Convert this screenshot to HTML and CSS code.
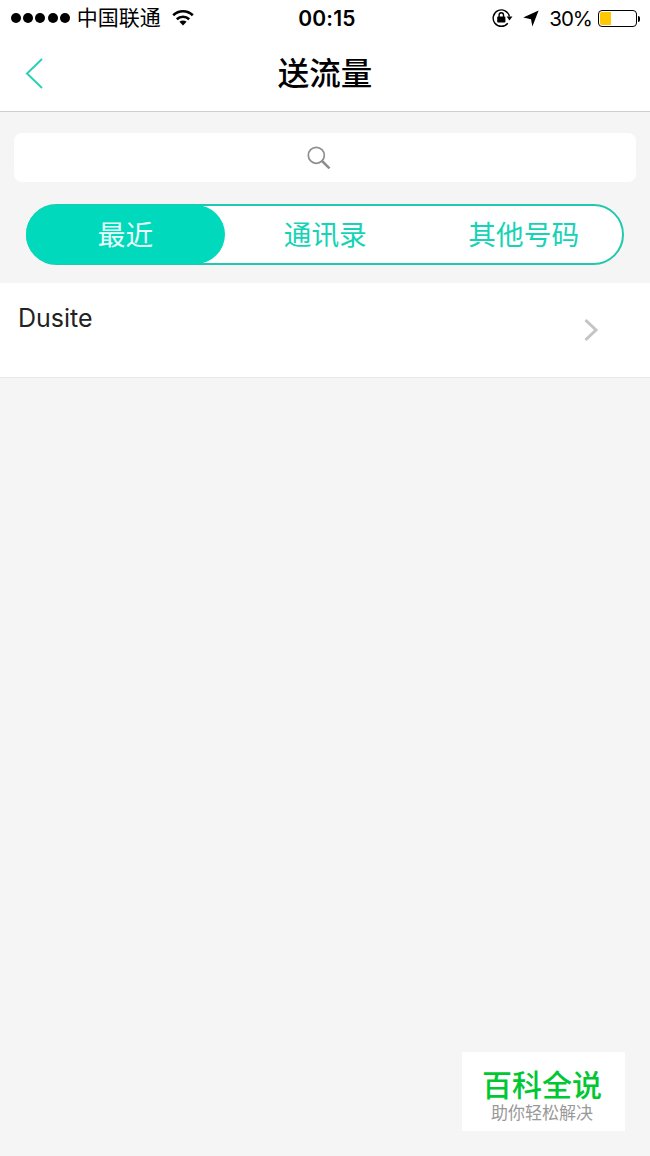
FILE: index.html
```html
<!DOCTYPE html>
<html lang="zh-CN">
<head>
    <meta charset="UTF-8">
    <meta name="viewport" content="width=device-width, initial-scale=1.0">
    <title>送流量</title>
    <link rel="stylesheet" href="styles.css">
</head>
<body>
    <div class="status-bar">
        <div class="status-left">
            <span class="signal"><i></i><i></i><i></i><i></i><i></i></span>
            <span class="carrier">中国联通</span>
            <svg class="wifi" width="22" height="17" viewBox="0 0 22 17" fill="none" stroke="#000" stroke-width="2.6">
                <path d="M1.2 6.3C6.8 .8 15.2 .8 20.8 6.3"/>
                <path d="M4.8 10.2C8.4 6.9 13.6 6.9 17.2 10.2"/>
                <path d="M7.4 12.8C9.5 11 12.5 11 14.6 12.8L11 16.6Z" fill="#000" stroke="none"/>
            </svg>
        </div>
        <span class="time">00:15</span>
        <div class="status-right">
            <svg class="lock" width="21" height="20" viewBox="0 0 21 20" fill="none" stroke="#000" stroke-width="1.4">
                <path d="M15.8 15.2A8.2 8.2 0 1 1 17.4 8.5"/>
                <path d="M14.6 8.6h5.8l-2.9 4z" fill="#000" stroke="none"/>
                <rect x="5.2" y="8.6" width="8.2" height="6" rx=".8" fill="#000" stroke="none"/>
                <path d="M7.1 9V7a2.2 2.2 0 0 1 4.4 0v2"/>
            </svg>
            <svg class="location" width="16" height="17" viewBox="0 0 16 17">
                <path d="M15.6 .4L9.4 16.6L8 9.2L.2 7.4Z"/>
            </svg>
            <span class="percent">30%</span>
            <span class="battery"><span class="battery-level"></span></span>
        </div>
    </div>

    <header class="navbar">
        <a href="#" class="back">
            <svg width="18" height="32" viewBox="0 0 18 32" fill="none" stroke="#2ccfb7" stroke-width="2">
                <path d="M17 1L2 15.5L17 30"/>
            </svg>
        </a>
        <h1 class="title">送流量</h1>
    </header>

    <div class="toolbar">
        <div class="search">
            <svg width="24" height="24" viewBox="0 0 24 24" fill="none" stroke="#8e8e8e">
                <circle cx="9.3" cy="9.3" r="8" stroke-width="1.7"/>
                <path d="M15 15L22.5 22.3" stroke-width="2.5"/>
            </svg>
        </div>
        <div class="tabs">
            <a href="#" class="tab active">最近</a>
            <a href="#" class="tab">通讯录</a>
            <a href="#" class="tab">其他号码</a>
        </div>
    </div>

    <div class="contact">
        <span class="contact-name">Dusite</span>
        <svg class="chevron" width="15" height="24" viewBox="0 0 15 24" fill="none" stroke="#c4c4c4" stroke-width="3">
            <path d="M1.5 2L12 12L1.5 22"/>
        </svg>
    </div>

    <div class="watermark">
        <strong class="watermark-name">百科全说</strong>
        <span class="watermark-slogan">助你轻松解决</span>
    </div>
</body>
</html>
```
FILE: styles.css
```css
:root {
    --primary: #00d9bb;
    --line: #20c9ad;
    --tab-text: #16d3b5;
    --bg: #f5f5f5;
}

* {
    margin: 0;
    padding: 0;
    box-sizing: border-box;
}

body {
    min-height: 1156px;
    background: var(--bg);
    color: #000;
    font-family: Inter, "Noto Sans CJK SC", sans-serif;
}

a {
    text-decoration: none;
}

svg {
    display: block;
}

/* Status bar */
.status-bar {
    display: grid;
    grid-template-columns: 1fr auto 1fr;
    align-items: center;
    height: 36px;
    padding: 0 10px 0 11px;
    background: #fff;
    font-size: 21px;
    line-height: 36px;
}

.status-left,
.status-right {
    display: flex;
    align-items: center;
}

.status-right {
    justify-content: flex-end;
}

.signal {
    display: flex;
    gap: 2.2px;
}

.signal i {
    width: 10px;
    height: 10px;
    border-radius: 50%;
    background: #000;
}

.carrier {
    margin-left: 7px;
    line-height: 36px;
}

.wifi {
    margin-left: 11px;
    margin-bottom: 2px;
}

.time {
    padding: 1px 0 0 3px;
    font-size: 21px;
    font-weight: 600;
    letter-spacing: 0.2px;
    line-height: 35px;
}

.location {
    margin: 0 10px 0 10px;
}

.percent {
    padding-top: 1px;
    font-size: 20.5px;
    letter-spacing: -1px;
    line-height: 35px;
}

.battery {
    position: relative;
    width: 39px;
    height: 17px;
    margin: 0 3px 0 6px;
    padding: 1px;
    border: 1px solid #000;
    border-radius: 4px;
}

.battery::after {
    content: '';
    position: absolute;
    top: 5px;
    right: -4px;
    width: 2px;
    height: 6px;
    border-radius: 0 2px 2px 0;
    background: #000;
}

.battery-level {
    display: block;
    width: 11px;
    height: 13px;
    border-radius: 2px 0 0 2px;
    background: #ffc800;
}

/* Header */
.navbar {
    display: grid;
    grid-template-columns: 1fr auto 1fr;
    align-items: center;
    height: 76px;
    padding: 0 25px;
    background: #fff;
    border-bottom: 1px solid #cfcfcf;
}

.title {
    padding-top: 1px;
    font-size: 31.5px;
    font-weight: 500;
    line-height: 74px;
}

/* Search and tabs */
.toolbar {
    padding: 21px 14px 18px;
}

.search {
    display: flex;
    align-items: center;
    justify-content: center;
    height: 49px;
    padding-right: 13px;
    border-radius: 8px;
    background: #fff;
}

.tabs {
    display: flex;
    height: 61px;
    margin: 22px 12px 0;
    border: 2px solid var(--line);
    border-radius: 31px;
    background: #fff;
}

.tab {
    flex: 1;
    padding-left: 2px;
    color: var(--tab-text);
    font-size: 27.7px;
    line-height: 58px;
    text-align: center;
}

.tab.active {
    flex: 0 0 199px;
    margin: -1px 0 -1px -2px;
    padding-left: 0;
    border-radius: 31px;
    background: var(--primary);
    color: #e9fffb;
    line-height: 60px;
}

/* Contact list */
.contact {
    display: flex;
    justify-content: space-between;
    height: 95px;
    padding: 18px 51px 0 18px;
    background: #fff;
    border-bottom: 1px solid #e8e8e8;
}

.contact-name {
    color: #222;
    font-size: 25px;
    line-height: 34px;
}

.chevron {
    margin-top: 17px;
}

.watermark {
    position: absolute;
    top: 1052px;
    left: 462px;
    display: flex;
    flex-direction: column;
    align-items: center;
    width: 163px;
    height: 79px;
    padding: 15px 3px 0 0;
    background: #fff;
}

.watermark-name {
    color: #00c832;
    font-size: 30px;
    font-weight: 500;
    line-height: 36px;
}

.watermark-slogan {
    color: #999;
    font-size: 17px;
    line-height: 21px;
}
```
